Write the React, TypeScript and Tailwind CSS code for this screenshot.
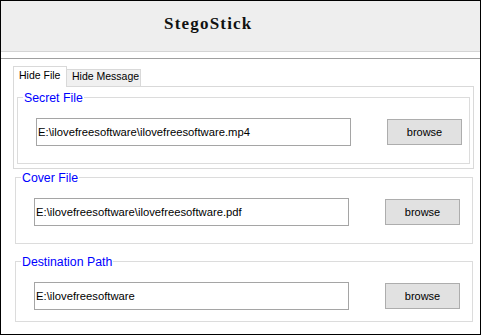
import React from "react";

function Group({
  label,
  value,
  outer,
  inputMl,
  pb,
}: {
  label: string;
  value: string;
  outer: string;
  inputMl: string;
  pb: string;
}) {
  return (
    <div className={`border border-[#dcdcdc] ${outer} ${pb}`}>
      <div className="-mt-[7px] ml-[5px] px-[1px] w-fit bg-white text-[12.3px] leading-[14px] text-[#0000ff]">
        {label}
      </div>
      <div className={`flex mt-[13px] ${inputMl}`}>
        <div className="w-[315px] h-[28px] border border-[#a5a5a5] bg-white flex items-center pl-[1px] text-[11.25px] text-black whitespace-nowrap overflow-hidden">
          {value}
        </div>
        <div className="ml-[36px] mt-[1px] w-[75px] h-[26px] border border-[#adadad] bg-[#e1e1e1] flex items-center justify-center text-[11px] text-black">
          browse
        </div>
      </div>
    </div>
  );
}

export default function App() {
  return (
    <div
      className="w-[481px] h-[335px] border border-black bg-white flex flex-col"
      style={{ fontFamily: '"Liberation Sans", Arial, sans-serif' }}
    >
      <div className="h-[51px] shrink-0 bg-[#eeeeee] border-b border-[#d4d4d4] pl-[163px] pt-[14px]">
        <div
          className="text-[17px] leading-[17px] font-bold tracking-[1.2px] text-[#111]"
          style={{ fontFamily: '"Liberation Serif", "Times New Roman", serif' }}
        >
          StegoStick
        </div>
      </div>
      <div className="mt-[6px] border-t border-[#a0a0a0] flex-1 flex flex-col">
        <div className="flex items-end mt-[7px] ml-[12px]">
          <div className="h-[21px] w-[54px] -mb-px border border-b-0 border-[#d9d9d9] bg-white relative z-10 pl-[5px] pt-[2px] text-[10.5px] leading-[13px] text-black">
            Hide File
          </div>
          <div className="h-[17px] w-[74px] border-t border-r border-[#d9d9d9] bg-[#f0f0f0] pl-[5px] text-[10.5px] leading-[13px] text-black whitespace-nowrap">
            Hide Message
          </div>
        </div>
        <div className="ml-[12px] w-[461px] h-[83px] border border-[#d9d9d9] pt-[10px] px-[3px]">
          <Group
            label="Secret File"
            value="E:\ilovefreesoftware\ilovefreesoftware.mp4"
            outer="w-[453px]"
            inputMl="ml-[18px]"
            pb="pb-[17px]"
          />
        </div>
        <Group
          label="Cover File"
          value="E:\ilovefreesoftware\ilovefreesoftware.pdf"
          outer="ml-[14px] w-[458px] mt-[8px]"
          inputMl="ml-[18px]"
          pb="pb-[17px]"
        />
        <Group
          label="Destination Path"
          value="E:\ilovefreesoftware"
          outer="ml-[14px] w-[458px] mt-[17px]"
          inputMl="ml-[18px]"
          pb="pb-[11px]"
        />
      </div>
    </div>
  );
}
